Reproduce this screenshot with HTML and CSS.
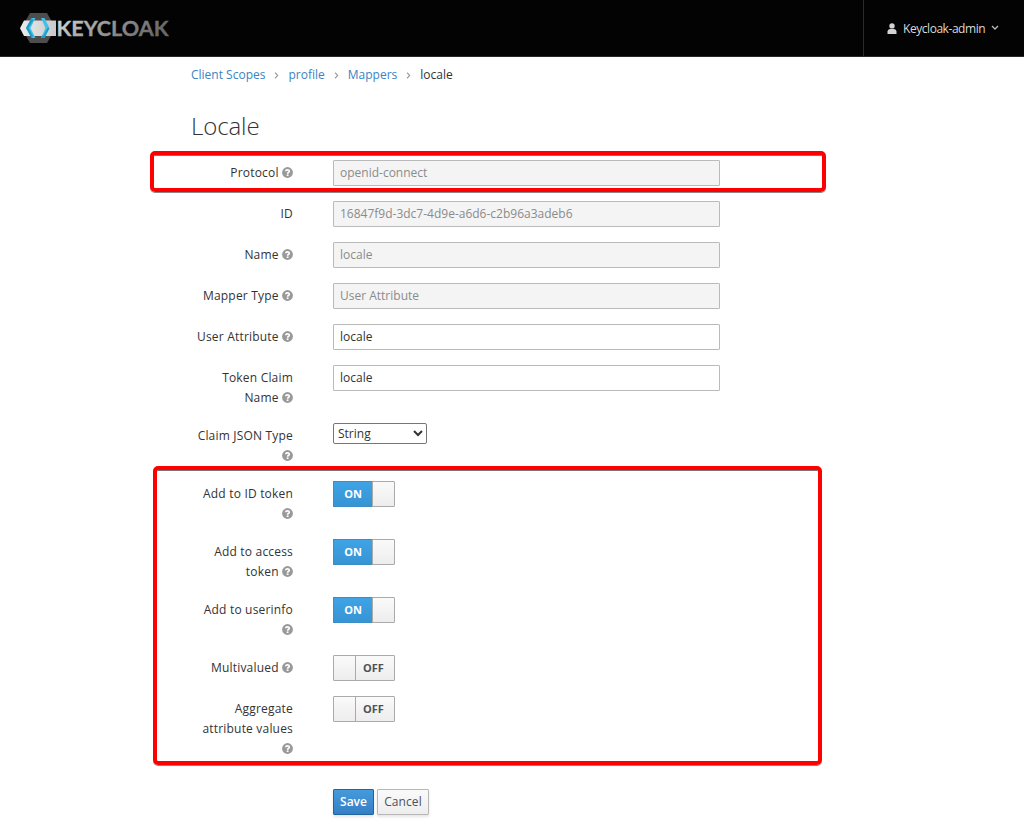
FILE: index.html
```html
<!DOCTYPE html>
<html lang="en">
<head>
<meta charset="utf-8">
<title>Keycloak Admin Console</title>
<link rel="stylesheet" href="styles.css">
</head>
<body>
<svg class="defs" width="0" height="0" aria-hidden="true">
  <symbol id="help" viewBox="0 0 11 11">
    <circle cx="5.5" cy="5.5" r="5.4" fill="#999"/>
    <path d="M3.700 4.300C3.800 2.400 7.300 2.400 7.300 4.200C7.300 5.300 5.600 5.200 5.600 6.700" fill="none" stroke="#fff" stroke-width="1.600"/>
    <rect x="4.700" y="7.400" width="1.800" height="1.600" fill="#fff"/>
  </symbol>
</svg>
<header class="navbar">
  <svg class="logo" viewBox="0 0 150 32" role="img" aria-label="Keycloak">
    <defs>
      <linearGradient id="word" x1="0" x2="1" y1="0" y2="0.25"><stop offset="0" stop-color="#dedede"/><stop offset="0.5" stop-color="#999"/><stop offset="1" stop-color="#696969"/></linearGradient>
      <linearGradient id="band" x1="0" x2="1"><stop offset="0" stop-color="#ececec"/><stop offset="1" stop-color="#c9c9c9"/></linearGradient>
    </defs>
    <path d="M10 1H27L35.500 16L27 31H10L1.500 16Z" fill="#4d4d4d"/>
    <path d="M4 8.500H36V24H4L0 16.200Z" fill="url(#band)"/>
    <path d="M11.500 6H15.500L10.500 16L15.500 26H11.500L6 16Z" fill="#42c0e8"/>
    <path d="M11.500 6L6 16L11.500 26L13 24L8.500 16L13.500 8Z" fill="#1d9bc6"/>
    <path d="M21 6H24.500L29.500 16L24.500 26H21L25.500 16Z" fill="#42c0e8"/>
    <path d="M29.500 16L24.500 26H21L22 23.500H23.500L27.500 16Z" fill="#1d9bc6"/>
    <text x="36.500" y="23.500" textLength="112" lengthAdjust="spacingAndGlyphs" fill="url(#word)">KEYCLOAK</text>
  </svg>
  <div class="user">
    <svg width="10" height="11" viewBox="0 0 10 11"><circle cx="5" cy="2.900" r="2.700" fill="#d2d2d2"/><path d="M0.500 11V8.500Q0.700 6.200 3 6H7Q9.300 6.200 9.500 8.500V11Z" fill="#d2d2d2"/></svg>
    <span class="username">Keycloak-admin</span>
    <svg width="8" height="6" viewBox="0 0 8 6"><path d="M1 1L4 4L7 1" fill="none" stroke="#bbb" stroke-width="1.300"/></svg>
  </div>
</header>
<main class="content">
  <nav class="breadcrumb">
    <a>Client Scopes</a><svg class="sep" viewBox="0 0 5 7"><path d="M1 .7L3.700 3.500L1 6.300"/></svg><a>profile</a><svg class="sep" viewBox="0 0 5 7"><path d="M1 .7L3.700 3.500L1 6.300"/></svg><a>Mappers</a><svg class="sep" viewBox="0 0 5 7"><path d="M1 .7L3.700 3.500L1 6.300"/></svg><span>locale</span>
  </nav>
  <h1>Locale</h1>
  <form class="form">
    <div class="row marked marked-protocol"><label>Protocol <svg class="help"><use href="#help"/></svg></label><input value="openid-connect" disabled></div>
    <div class="row"><label>ID</label><input value="16847f9d-3dc7-4d9e-a6d6-c2b96a3adeb6" disabled></div>
    <div class="row"><label>Name <svg class="help"><use href="#help"/></svg></label><input value="locale" disabled></div>
    <div class="row"><label>Mapper Type <svg class="help"><use href="#help"/></svg></label><input value="User Attribute" disabled></div>
    <div class="row"><label>User Attribute <svg class="help"><use href="#help"/></svg></label><input value="locale"></div>
    <div class="row"><label>Token Claim<br>Name <svg class="help"><use href="#help"/></svg></label><input value="locale"></div>
    <div class="row"><label>Claim JSON Type<br><svg class="help"><use href="#help"/></svg></label><select><option>String</option></select></div>
    <div class="marked marked-switches">
      <div class="row"><label>Add to ID token<br><svg class="help"><use href="#help"/></svg></label><div class="switch on"><b>ON</b><i></i></div></div>
      <div class="row"><label>Add to access<br>token <svg class="help"><use href="#help"/></svg></label><div class="switch on"><b>ON</b><i></i></div></div>
      <div class="row"><label>Add to userinfo<br><svg class="help"><use href="#help"/></svg></label><div class="switch on"><b>ON</b><i></i></div></div>
      <div class="row"><label>Multivalued <svg class="help"><use href="#help"/></svg></label><div class="switch off"><i></i><b>OFF</b></div></div>
      <div class="row"><label>Aggregate<br>attribute values<br><svg class="help"><use href="#help"/></svg></label><div class="switch off"><i></i><b>OFF</b></div></div>
    </div>
    <div class="actions"><button type="button" class="btn primary">Save</button><button type="button" class="btn">Cancel</button></div>
  </form>
</main>
</body>
</html>
```
FILE: styles.css
```css
* { box-sizing: border-box; }
body { margin: 0; height: 840px; overflow: hidden; background: #fff; color: #333; font: 12px/20px "Open Sans", sans-serif; }
.defs { position: absolute; }
.navbar { display: flex; justify-content: space-between; height: 57px; background: #030303; border-bottom: 1px solid #292929; }
.logo { width: 150px; height: 32px; margin: 12px 0 0 20px; }
.logo text { font: 700 21.5px Lato, sans-serif; stroke: url(#word); stroke-width: 0.3px; }
.user { display: flex; align-items: center; width: 161px; padding-left: 23px; border-left: 1px solid #2b2b2b; color: #d9d9d9; }
.username { width: 82px; margin: 2px 6px 0 6px; white-space: nowrap; letter-spacing: -0.45px; }
.content { padding: 8px 0 0 191px; }
.breadcrumb { display: flex; align-items: center; height: 20px; }
.breadcrumb a { color: #3a83c4; }
.sep { width: 5px; height: 7px; margin: 1px 9px; }
.sep path { fill: none; stroke: #999; stroke-width: 1.1; }
h1 { margin: 26px 0 0; height: 30px; font-weight: 300; font-size: 24px; line-height: 30px; letter-spacing: -0.1px; }
.form { width: 529px; padding-top: 19px; }
.row { display: flex; align-items: flex-start; min-height: 26px; margin-bottom: 15px; }
.row label { width: 102px; margin-right: 40px; padding-top: 3px; text-align: right; white-space: nowrap; letter-spacing: 0.19px; }
.help { width: 11px; height: 11px; vertical-align: -1px; }
input { width: 387px; height: 26px; padding: 1px 6px 3px; border: 1px solid #bababa; border-radius: 1px; color: #333; background: #fff; font: 12px/20px "Open Sans", sans-serif; }
input:disabled { color: #8b8b8b; background: #f4f4f4; }
select { width: 94px; height: 21px; border: 1px solid #767676; border-radius: 2px; color: #333; background: #fff; font: 12px "Open Sans", sans-serif; }
.marked { position: relative; }
.marked::before { content: ""; position: absolute; box-sizing: border-box; border: 4px solid #f00; border-radius: 5px; box-shadow: 0 1px 0 #888, inset 0 1px 0 #777; pointer-events: none; }
.marked-protocol::before { left: -41px; top: -9px; width: 676px; height: 41px; }
.marked-switches::before { left: -38px; top: -15px; width: 669px; height: 299px; }
.switch { display: flex; width: 62px; height: 26px; border: 1px solid #aaa; border-radius: 1px; background: linear-gradient(#fafafa, #ededed); line-height: 24px; }
.switch b { flex: 1; text-align: center; font-size: 11px; font-weight: 700; }
.switch i { width: 22px; background: linear-gradient(#fafafa, #ededed); }
.on b { margin: -1px 0 -1px -1px; border: solid #3a8fcb; border-width: 1px 0 1px 1px; background: linear-gradient(#3fa3e6, #3794d3); color: #fff; }
.on i { border-left: 1px solid #aaa; }
.off i { border-right: 1px solid #aaa; }
.off b { padding-right: 3px; color: #4d5258; }
.actions { display: flex; gap: 3px; padding: 15px 0 0 142px; }
.btn { width: 52px; height: 26px; padding: 0; border: 1px solid #b7b7b7; border-radius: 1px; background: linear-gradient(#fafafa, #ededed); color: #4d5258; font: 500 12px/22px "Open Sans", sans-serif; letter-spacing: 0.1px; box-shadow: 0 2px 3px rgba(3,3,3,.1); }
.btn.primary { width: 41px; border-color: #21659c; background: linear-gradient(#459bdc, #347fc4); color: #fff; font-weight: 600; letter-spacing: 0; }
```
